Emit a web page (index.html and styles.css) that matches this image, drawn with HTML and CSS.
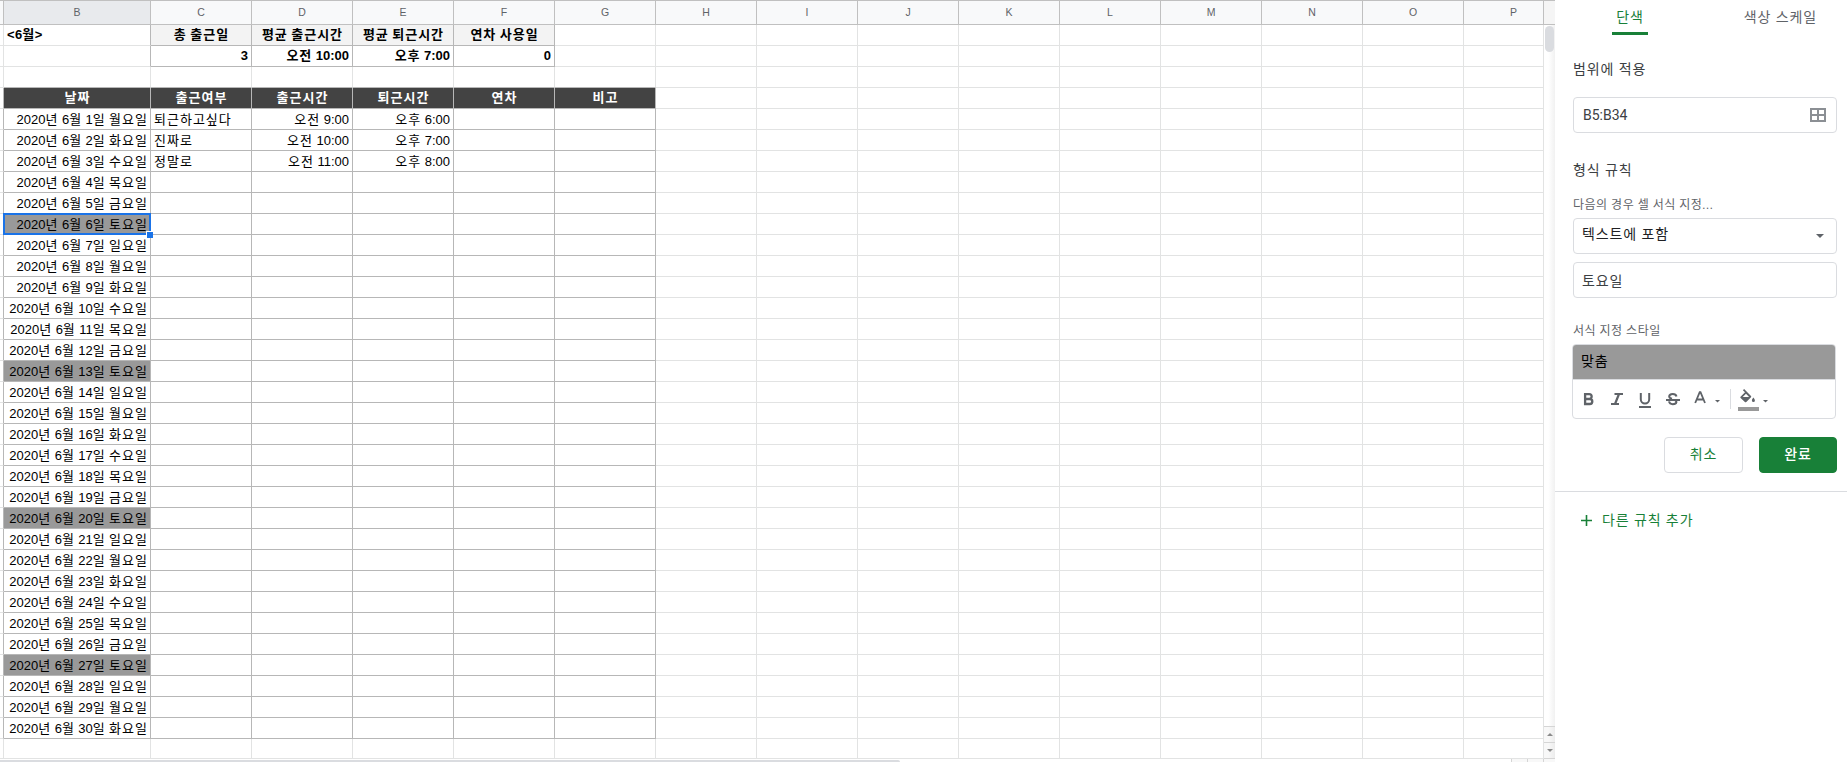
FILE: index.html
```
<!DOCTYPE html>
<html lang="ko">
<head>
    <meta charset="UTF-8">
    <meta name="viewport" content="width=device-width, initial-scale=1.0">
    <title>출근부</title>
    <link rel="stylesheet" href="styles.css">
</head>
<body>
    <div class="sheet-area">
        <div class="sheet-main">
            <div class="sheet" id="sheet"></div>
            <div class="vscroll">
                <div class="vscroll-head"></div>
                <div class="vscroll-track"><div class="vscroll-thumb"></div></div>
                <div class="vscroll-button"><svg width="6" height="3"><path d="M3 0L6 3H0z"/></svg></div>
                <div class="vscroll-button"><svg width="6" height="3"><path d="M0 0H6L3 3z"/></svg></div>
            </div>
        </div>
        <div class="hscroll">
            <div class="hscroll-thumb"></div>
            <div class="hscroll-buttons"><span></span><span></span><span></span></div>
        </div>
    </div>

    <div class="panel">
        <div class="tabs">
            <div class="tab active">단색</div>
            <div class="tab">색상 스케일</div>
        </div>

        <div class="form">
            <div class="section-title">범위에 적용</div>
            <div class="field range-field">
                <span class="latin">B5:B34</span>
                <svg class="grid-icon" width="16" height="14" viewBox="0 0 16 14">
                    <path d="M1 1H15V13H1zM8 1V13M1 7H15" fill="none" stroke="#8b8f94" stroke-width="2"/>
                </svg>
            </div>

            <div class="section-title rule-title">형식 규칙</div>
            <div class="label">다음의 경우 셀 서식 지정...</div>
            <div class="field select-field">
                <span>텍스트에 포함</span>
                <svg class="select-arrow" width="8" height="4"><path d="M0 0H8L4 4z"/></svg>
            </div>
            <div class="field value-field"><span>토요일</span></div>

            <div class="label style-label">서식 지정 스타일</div>
            <div class="style-box">
                <div class="style-preview">맞춤</div>
                <div class="toolbar">
                    <svg width="200" height="38" viewBox="0 0 200 38">
                        <g fill="none" stroke="#5f6368" stroke-width="2.2">
                            <path d="M12.1 14.1H16.2a2.4 2.4 0 0 1 0 4.9H12.1zM12.1 19H16.8a2.5 2.5 0 0 1 0 5H12.1z" stroke-width="2.3"/>
                            <path d="M41.5 14H50M38 24H46M46 14L42 24"/>
                            <path d="M67.8 13V19.3a4.2 4.2 0 0 0 8.4 0V13" stroke-width="2"/>
                            <path d="M66 27H78" stroke-width="2"/>
                            <path d="M103.5 16.4C103 14.4 101.5 13.9 99.8 13.9C97.5 13.9 96.2 15 96.2 16.4C96.2 17.6 97.2 18.3 99 18.8M102.3 20.2C103.2 21 103.6 21.5 103.4 22.3C103.1 23.6 101.8 24.2 99.8 24.2C97.7 24.2 96.4 23.3 96 21.4" stroke-width="2"/>
                            <path d="M93 20H107" stroke-width="2"/>
                            <path d="M122.2 23L126.7 12.2H127.5L132 23M124 19.5H130" stroke-width="1.8"/>
                        </g>
                        <g fill="#5f6368">
                            <path d="M142 20H147L144.5 22.5z"/>
                            <path d="M190 20H195L192.5 22.5z"/>
                            <path fill-rule="evenodd" d="M171.1 9L169.9 10.2L172 12.3L167.5 16.8Q167 17.5 167.6 18.1L171.9 22.1Q172.6 22.6 173.3 22L178 17.3Q178.5 16.7 178 16zM169.7 17L173 13.7L176.1 17z"/>
                            <path d="M180.4 17.5C179.2 19.2 178.9 19.8 178.9 20.4a1.5 1.5 0 0 0 3 0C181.9 19.8 181.5 19.2 180.4 17.5z"/>
                        </g>
                        <path d="M157.5 9V29" stroke="#dadce0"/>
                        <path d="M165 27H186V31H165z" fill="#999"/>
                    </svg>
                </div>
            </div>

            <div class="actions">
                <button class="cancel-button">취소</button>
                <button class="submit-button">완료</button>
            </div>
        </div>

        <div class="add-rule">
            <svg width="11" height="11"><path d="M5.5 0V11M0 5.5H11" stroke="#188038" stroke-width="1.6"/></svg>
            <span>다른 규칙 추가</span>
        </div>
    </div>

    <script>
        const columns = ['', 'B', 'C', 'D', 'E', 'F', 'G', 'H', 'I', 'J', 'K', 'L', 'M', 'N', 'O', 'P'];
        const weekdays = ['일', '월', '화', '수', '목', '금', '토'];
        const records = [
            ['퇴근하고싶다', '오전 9:00', '오후 6:00'],
            ['진짜로', '오전 10:00', '오후 7:00'],
            ['정말로', '오전 11:00', '오후 8:00']
        ];

        const rows = [
            ['<6월>', '총 출근일', '평균 출근시간', '평균 퇴근시간', '연차 사용일'],
            ['', '3', '오전 10:00', '오후 7:00', '0'],
            [],
            ['날짜', '출근여부', '출근시간', '퇴근시간', '연차', '비고']
        ];
        for (let day = 1; day <= 30; day++) {
            const weekday = weekdays[day % 7];
            rows.push([`2020년 6월 ${day}일 ${weekday}요일`].concat(records[day - 1] || []));
        }
        rows.push([]);

        // 숫자와 한글의 자간을 다르게 적용
        function format(text) {
            return text.replace(/</g, '&lt;').replace(/>/g, '&gt;')
                .replace(/[0-9:]+/g, '<span class="num">$&</span>');
        }

        function cellClass(row, col, text) {
            const names = ['cell'];
            if (row === 1 && col >= 2 && col <= 5) names.push('summary-head', 'lined');
            if (row === 2 && col >= 2 && col <= 5) names.push('summary-value', 'lined', 'right');
            if (row === 1 && col === 1) names.push('month');
            if (row <= 2 && col === 1) names.push('lined-right');
            if (row === 3 && col >= 1 && col <= 6) names.push('lined-bottom');
            if (row >= 4 && row <= 34) {
                if (col === 0) names.push('lined-right');
                if (col >= 1 && col <= 6) names.push('lined');
                if (row === 4 && col >= 1 && col <= 6) names.push('table-head');
                if (row > 4) names.push('record');
                if (row > 4 && (col === 1 || col === 3 || col === 4)) names.push('right');
            }
            if (text.endsWith('토요일')) names.push('saturday');
            if (row === 10 && col === 1) names.push('selected');
            return names.join(' ');
        }

        let html = columns.map((name, i) => `<div class="column-head${i === 1 ? ' current' : ''}">${name}</div>`).join('');
        rows.forEach((data, r) => {
            columns.forEach((name, c) => {
                const text = (c > 0 && data[c - 1]) || '';
                html += `<div class="${cellClass(r + 1, c, text)}">${format(text)}</div>`;
            });
        });
        document.getElementById('sheet').innerHTML = html;
    </script>
</body>
</html>
```

FILE: styles.css
```
body {
    margin: 0;
    width: 1847px;
    height: 762px;
    overflow: hidden;
    display: flex;
    background-color: white;
    font-family: "Liberation Sans", "Noto Sans CJK KR", sans-serif;
}
.sheet-area {
    width: 1555px;
    flex-shrink: 0;
}
.sheet-main {
    display: flex;
    height: 759px;
}
.sheet {
    display: grid;
    grid-template-columns: 4px 147px repeat(13, 101px) 80px;
    grid-template-rows: 25px repeat(34, 21px) 20px;
}
.column-head {
    box-sizing: border-box;
    border-top: 1px solid #c0c0c0;
    border-right: 1px solid #c0c0c0;
    border-bottom: 1px solid #c0c0c0;
    background-color: #f8f9fa;
    color: #5f6368;
    font-size: 10.5px;
    line-height: 23px;
    text-align: center;
}
.column-head.current {
    background-color: #e8eaed;
}
/* 마지막 열은 스크롤 영역 밑으로 잘려 있음 */
.column-head:nth-child(16) {
    padding-left: 20px;
}
.cell {
    box-sizing: border-box;
    position: relative;
    border-right: 1px solid #e2e3e3;
    border-bottom: 1px solid #e2e3e3;
    padding: 0 2px 0 3px;
    font-size: 13px;
    line-height: 20px;
    letter-spacing: 1px;
    word-spacing: -1.2px;
    white-space: nowrap;
    color: black;
}
.cell:nth-child(16n + 1) {
    padding: 0;
}
.num {
    letter-spacing: 0;
}
.lined {
    border-color: #b7b7b7;
}
.lined-right {
    border-right-color: #b7b7b7;
}
.lined-bottom {
    border-bottom-color: #b7b7b7;
}
.month {
    font-weight: bold;
    letter-spacing: 0.5px;
}
.summary-head {
    background-color: #f3f3f3;
    font-weight: bold;
    text-align: center;
}
.summary-value {
    font-weight: bold;
    padding-right: 3px;
}
.table-head {
    background-color: #434343;
    color: white;
    font-weight: bold;
    text-align: center;
}
.record {
    height: 21px;
    line-height: 21px;
}
.right {
    text-align: right;
}
.record.right:not(:nth-child(16n + 2)) {
    padding-right: 3px;
}
.saturday {
    background-color: #999999;
}
.selected::before {
    content: "";
    position: absolute;
    top: -1px;
    left: -1px;
    right: -1px;
    bottom: -1px;
    border: 2px solid #1a73e8;
    z-index: 1;
}
.selected::after {
    content: "";
    position: absolute;
    right: -3px;
    bottom: -4px;
    width: 6px;
    height: 6px;
    background-color: #1a73e8;
    border-top: 1px solid white;
    border-left: 1px solid white;
    z-index: 2;
}
.vscroll {
    width: 11px;
    display: flex;
    flex-direction: column;
    background: linear-gradient(to right, white 40%, #f1f1f1);
}
.vscroll-head {
    height: 23px;
    border-top: 1px solid #c0c0c0;
    border-bottom: 1px solid #c0c0c0;
    background-color: #f5f5f5;
}
.vscroll-track {
    flex: 1;
    padding: 1px;
}
.vscroll-thumb {
    width: 9px;
    height: 26px;
    border-radius: 5px;
    background-color: #dadce0;
}
.vscroll-button {
    height: 15px;
    border-top: 1px solid #d5d5d5;
    background: linear-gradient(to right, #f8f8f8 40%, #ececec);
    display: flex;
    align-items: center;
    justify-content: center;
}
.vscroll-button:last-child {
    border-bottom: 1px solid #d5d5d5;
}
.vscroll-button svg {
    fill: #8a8a8a;
}
.hscroll {
    height: 3px;
    display: flex;
    justify-content: space-between;
}
.hscroll-thumb {
    width: 900px;
    margin-top: 1px;
    background-color: #dadce0;
    border-top-right-radius: 3px;
}
.hscroll-buttons {
    display: flex;
}
.hscroll-buttons span {
    width: 15px;
    border-left: 1px solid #d5d5d5;
    background-color: #f8f8f8;
}
.hscroll-buttons span:last-child {
    width: 11px;
}
.panel {
    flex: 1;
    background-color: white;
    color: #3c4043;
    font-family: Roboto, "Noto Sans CJK KR", sans-serif;
    font-size: 14px;
    letter-spacing: 0.9px;
}
.latin {
    letter-spacing: 0;
}
.tabs {
    display: flex;
    justify-content: space-between;
    padding: 0 30px 0 57px;
}
.tab {
    box-sizing: border-box;
    height: 35px;
    padding-top: 7px;
    line-height: 20px;
    color: #5f6368;
    border-bottom: 3px solid transparent;
}
.tab.active {
    width: 36px;
    text-align: center;
    color: #188038;
    background: linear-gradient(#188038, #188038) bottom / 100% 3px no-repeat border-box;
}
.form {
    padding: 24px 10px 18px 18px;
    border-bottom: 1px solid #dadce0;
}
.section-title {
    height: 20px;
    line-height: 20px;
    margin-bottom: 18px;
}
.field {
    box-sizing: border-box;
    height: 36px;
    border: 1px solid #dadce0;
    border-radius: 4px;
    padding: 0 10px 0 8px;
    display: flex;
    align-items: center;
    justify-content: space-between;
}
.rule-title {
    margin-top: 27px;
    margin-bottom: 17px;
}
.label {
    height: 16px;
    line-height: 16px;
    margin-bottom: 5px;
    font-size: 12px;
    letter-spacing: 0.5px;
    color: #5f6368;
}
.range-field .latin {
    margin-left: 1px;
}
.select-field {
    color: #202124;
}
.select-field span {
    margin-bottom: 6px;
}
.select-arrow {
    margin-right: 2px;
    fill: #5f6368;
}
.value-field {
    margin-top: 8px;
}
.value-field span {
    margin-bottom: 1px;
}
.style-label {
    margin-top: 25px;
    margin-bottom: 5px;
}
.style-box {
    width: 262px;
    margin-left: -1px;
    border: 1px solid #dadce0;
    border-radius: 4px;
    overflow: hidden;
}
.style-preview {
    height: 34px;
    line-height: 32px;
    padding-left: 8px;
    background-color: #999999;
    border-bottom: 1px solid #dadce0;
    color: black;
}
.toolbar {
    height: 38px;
}
.toolbar svg {
    display: block;
}
.actions {
    display: flex;
    justify-content: flex-end;
    gap: 16px;
    margin-top: 18px;
}
.actions button {
    box-sizing: border-box;
    width: 79px;
    height: 36px;
    padding: 0 0 5px;
    border: 1px solid #dadce0;
    border-radius: 4px;
    background-color: white;
    color: #188038;
    font: inherit;
    letter-spacing: 0.9px;
}
.actions .submit-button {
    width: 78px;
    border-color: #188038;
    background-color: #188038;
    color: white;
    font-weight: 500;
}
.add-rule {
    display: flex;
    align-items: center;
    gap: 10px;
    padding: 18px 0 0 26px;
    line-height: 20px;
    color: #188038;
}
```
